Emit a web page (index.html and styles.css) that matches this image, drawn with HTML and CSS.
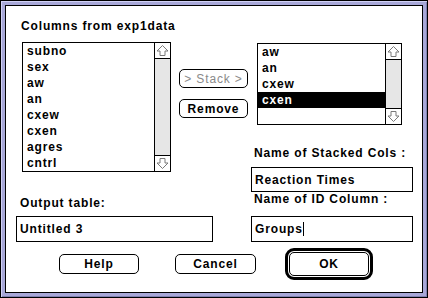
FILE: index.html
```html
<!DOCTYPE html>
<html>
<head>
<meta charset="utf-8">
<link rel="stylesheet" href="styles.css">
</head>
<body>
<div class="frame">
  <div class="inner">
    <div class="main">
      <div class="col-left">
        <div class="label title">Columns from exp1data</div>
        <div class="list-row">
          <div class="list list-left">
            <div class="items">
              <div class="item">subno</div>
              <div class="item">sex</div>
              <div class="item">aw</div>
              <div class="item">an</div>
              <div class="item">cxew</div>
              <div class="item">cxen</div>
              <div class="item">agres</div>
              <div class="item">cntrl</div>
            </div>
            <div class="scrollbar">
              <div class="arrow arrow-up"><svg width="13" height="13" viewBox="0 0 13 13"><path d="M6.5 1.5 L12 7 L9 7 L9 11.5 L4 11.5 L4 7 L1 7 Z" fill="none" stroke="#7a7a7a" stroke-width="1"/></svg></div>
              <div class="track"></div>
              <div class="arrow arrow-down"><svg width="13" height="13" viewBox="0 0 13 13"><path d="M6.5 11.5 L12 6 L9 6 L9 1.5 L4 1.5 L4 6 L1 6 Z" fill="none" stroke="#7a7a7a" stroke-width="1"/></svg></div>
            </div>
          </div>
          <div class="mid-buttons">
            <div class="btn btn-small dimmed">&gt; Stack &gt;</div>
            <div class="btn btn-small btn-remove">Remove</div>
          </div>
        </div>
        <div class="label label-output">Output table:</div>
        <div class="textbox textbox-output">Untitled 3</div>
      </div>
      <div class="col-right">
        <div class="list list-right">
          <div class="items">
            <div class="item">aw</div>
            <div class="item">an</div>
            <div class="item">cxew</div>
            <div class="item selected">cxen</div>
          </div>
          <div class="scrollbar">
            <div class="arrow arrow-up"><svg width="13" height="13" viewBox="0 0 13 13"><path d="M6.5 1.5 L12 7 L9 7 L9 11.5 L4 11.5 L4 7 L1 7 Z" fill="none" stroke="#7a7a7a" stroke-width="1"/></svg></div>
            <div class="track"></div>
            <div class="arrow arrow-down"><svg width="13" height="13" viewBox="0 0 13 13"><path d="M6.5 11.5 L12 6 L9 6 L9 1.5 L4 1.5 L4 6 L1 6 Z" fill="none" stroke="#7a7a7a" stroke-width="1"/></svg></div>
          </div>
        </div>
        <div class="label label-stacked">Name of Stacked Cols :</div>
        <div class="textbox textbox-stacked">Reaction Times</div>
        <div class="label label-id">Name of ID Column :</div>
        <div class="textbox textbox-id">Groups<span class="caret"></span></div>
      </div>
    </div>
    <div class="bottom">
      <div class="btn btn-help">Help</div>
      <div class="btn btn-cancel">Cancel</div>
      <div class="default-ring"><div class="btn btn-ok">OK</div></div>
    </div>
  </div>
</div>
</body>
</html>
```
FILE: styles.css
```css
html, body {
  margin: 0;
  padding: 0;
  background: #fff;
}
body {
  font-family: "Liberation Sans", Arial, sans-serif;
  font-weight: bold;
  font-size: 12px;
  letter-spacing: 0.85px;
  color: #000;
}
.frame {
  width: 428px;
  height: 298px;
  box-sizing: border-box;
  border: 1px solid #000;
  background: #a8a8d8;
  box-shadow: inset 1px 1px 0 #d0d0f4, inset -1px -1px 0 #8080b0;
  padding: 4px;
}
.inner {
  box-sizing: border-box;
  height: 100%;
  border: 1px solid #000;
  background: #fff;
  padding: 13px 0 0 10px;
  display: flex;
  flex-direction: column;
}
.main {
  display: flex;
}
.col-left {
  width: 235px;
  display: flex;
  flex-direction: column;
}
.col-right {
  width: 162px;
  display: flex;
  flex-direction: column;
}
.label {
  height: 14px;
  line-height: 14px;
  white-space: nowrap;
}
.title { margin-left: 5px; }
.list-row {
  display: flex;
  margin-top: 9px;
  margin-left: 6px;
}
.list {
  box-sizing: border-box;
  border: 1px solid #000;
  display: flex;
  background: #fff;
}
.list-left {
  width: 149px;
  height: 130px;
}
.list-right {
  width: 145px;
  height: 82px;
  margin-top: 24px;
  margin-left: 6px;
}
.items {
  flex: 1;
  display: flex;
  flex-direction: column;
}
.item {
  height: 16px;
  line-height: 16px;
  padding-left: 4px;
  white-space: nowrap;
}
.item.selected {
  background: #000;
  color: #fff;
}
.scrollbar {
  width: 15px;
  border-left: 1px solid #000;
  display: flex;
  flex-direction: column;
  background: #e6e6e6;
}
.arrow {
  height: 15px;
  background: #fff;
  display: flex;
  align-items: center;
  justify-content: center;
}
.arrow-up { border-bottom: 1px solid #000; }
.arrow-down { border-top: 1px solid #000; }
.track { flex: 1; }
.mid-buttons {
  display: flex;
  flex-direction: column;
  margin-left: 8px;
  margin-top: 27px;
}
.btn {
  box-sizing: border-box;
  border: 1px solid #000;
  border-radius: 5px;
  display: flex;
  align-items: center;
  justify-content: center;
  background: #fff;
  white-space: nowrap;
}
.btn-small {
  width: 69px;
  height: 19px;
}
.btn-remove { margin-top: 11px; }
.dimmed {
  color: #8a8a8a;
  font-weight: normal;
}
.label-output { margin-top: 24px; margin-left: 4px; }
.textbox {
  box-sizing: border-box;
  border: 1px solid #000;
  height: 26px;
  padding-left: 3px;
  line-height: 22px;
  white-space: nowrap;
  display: flex;
  align-items: center;
}
.textbox-output { width: 197px; margin-top: 6px; }
.label-stacked { margin-top: 21px; margin-left: 3px; }
.textbox-stacked { width: 162px; margin-top: 7px; height: 25px; }
.label-id { margin-left: 3px; }
.textbox-id { width: 162px; margin-top: 10px; }
.caret {
  display: inline-block;
  width: 1px;
  height: 14px;
  background: #000;
  margin-left: 0;
}
.bottom {
  display: flex;
  align-items: center;
  margin-top: 6px;
  padding-left: 43px;
  height: 32px;
}
.btn-help { width: 80px; height: 20px; }
.btn-cancel { width: 81px; height: 20px; margin-left: 36px; }
.default-ring {
  box-sizing: border-box;
  width: 88px;
  height: 32px;
  margin-left: 29px;
  border: 3px solid #000;
  border-radius: 9px;
  padding: 1px;
  display: flex;
}
.btn-ok {
  flex: 1;
  border-radius: 5px;
}
```
